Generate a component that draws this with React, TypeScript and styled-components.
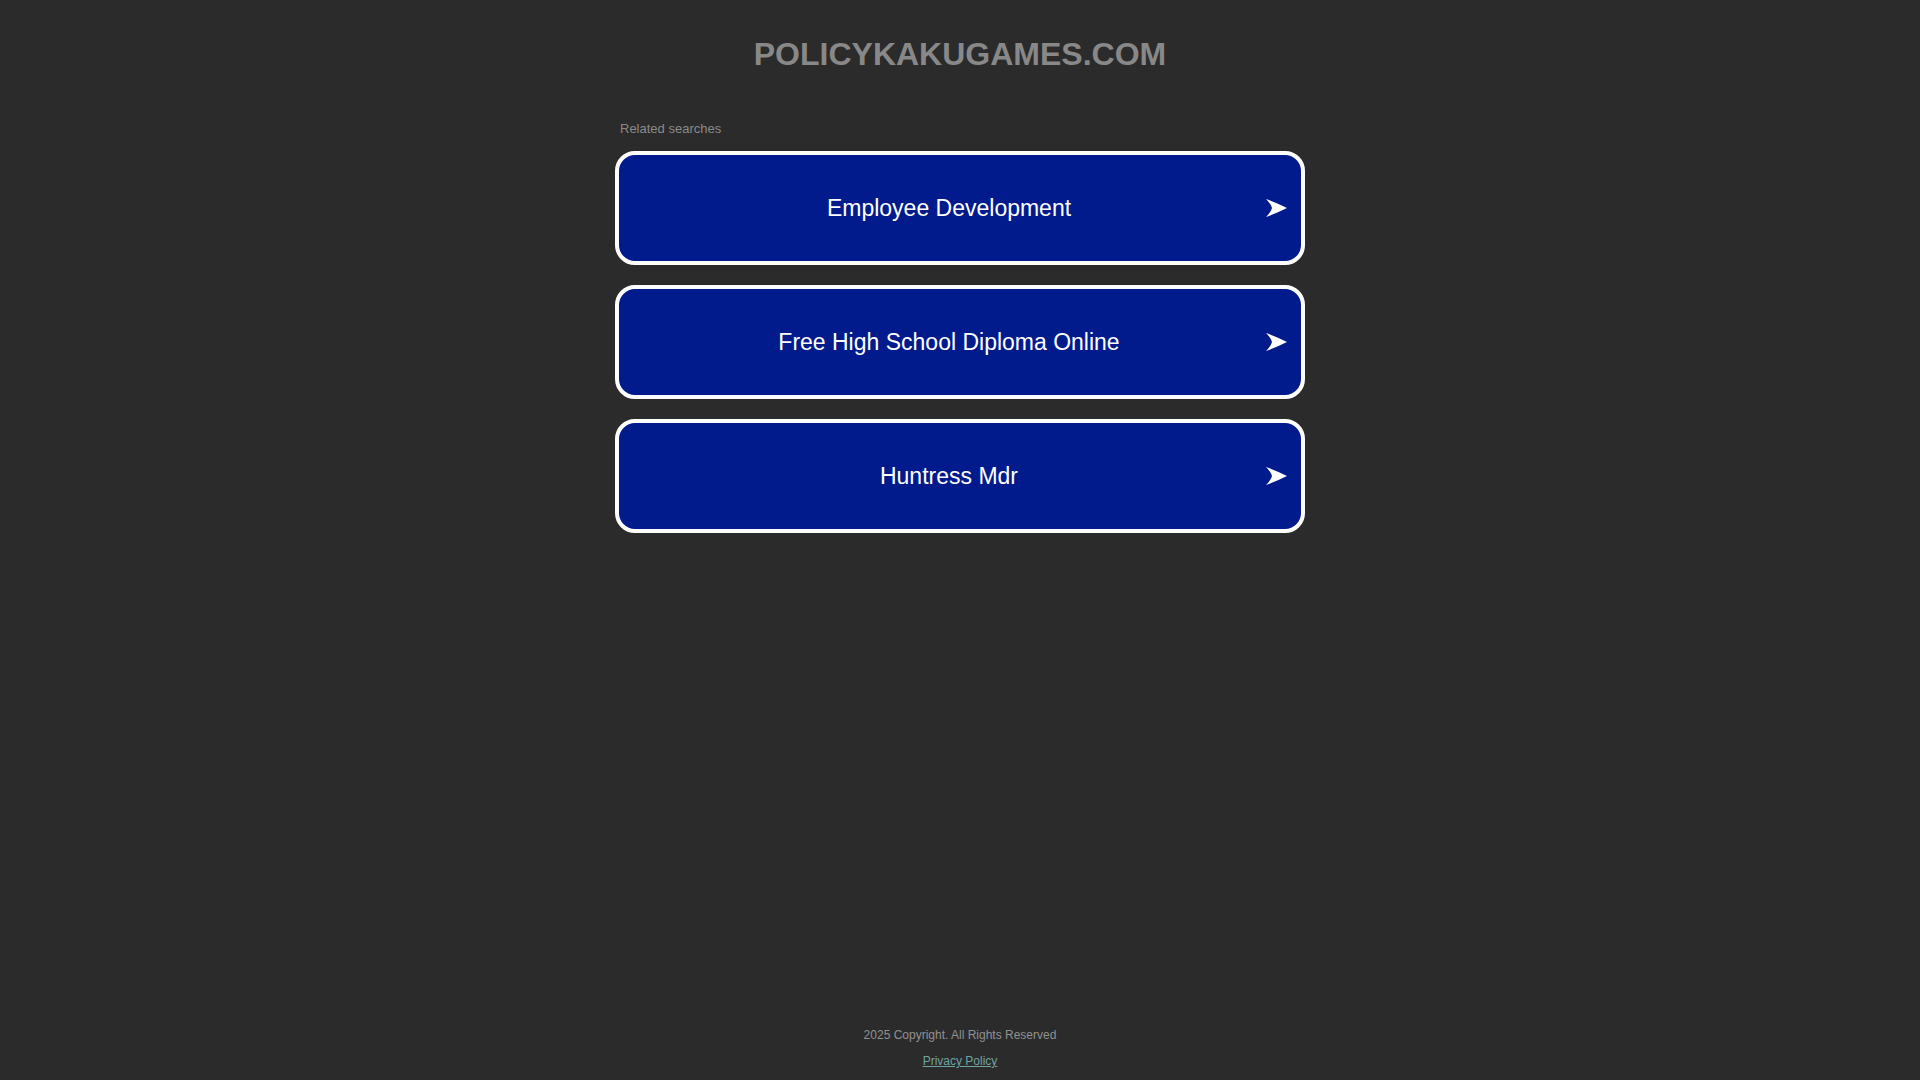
import React from "react";
import styled, { createGlobalStyle } from "styled-components";

const GlobalStyle = createGlobalStyle`
  html, body {
    margin: 0;
    padding: 0;
    background: #2b2b2b;
    font-family: "Liberation Sans", Arial, sans-serif;
  }
`;

const Page = styled.div`
  min-height: 100vh;
  display: flex;
  flex-direction: column;
  align-items: center;
  box-sizing: border-box;
`;

const Title = styled.h1`
  margin: 36px 0 0;
  font-size: 32px;
  line-height: 37px;
  font-weight: 700;
  color: #888888;
`;

const Content = styled.main`
  width: 690px;
  margin-top: 48px;
  display: flex;
  flex-direction: column;
`;

const Label = styled.div`
  font-size: 13px;
  line-height: 15px;
  color: #8a8a8a;
  padding-left: 5px;
  margin-bottom: 15px;
`;

const Card = styled.a`
  box-sizing: border-box;
  height: 114px;
  margin-bottom: 20px;
  display: flex;
  align-items: center;
  padding: 0 14px 0 13px;
  background: #011a8c;
  border: 4px solid #ffffff;
  border-radius: 20px;
  color: #ffffff;
  text-decoration: none;
  cursor: pointer;
`;

const CardText = styled.span`
  flex: 1;
  text-align: center;
  font-size: 23px;
  line-height: 27px;
`;

const Arrow = styled.svg`
  width: 21px;
  height: 18px;
  flex: none;
`;

const Footer = styled.footer`
  margin-top: auto;
  padding-bottom: 12px;
  display: flex;
  flex-direction: column;
  align-items: center;
  gap: 12px;
  font-size: 12px;
  line-height: 14px;
  color: #919191;
`;

const PolicyLink = styled.a`
  color: #6fa3a3;
  text-decoration: underline;
`;

const searches = [
  "Employee Development",
  "Free High School Diploma Online",
  "Huntress Mdr",
];

export default function App() {
  return (
    <>
      <GlobalStyle />
      <Page>
        <Title>POLICYKAKUGAMES.COM</Title>
        <Content>
          <Label>Related searches</Label>
          {searches.map((s) => (
            <Card key={s}>
              <CardText>{s}</CardText>
              <Arrow viewBox="0 0 21 18">
                <path d="M0 0 Q10 3.5 21 9 Q10 14.5 0 18 Q5 13 6 9 Q5 5 0 0 Z" fill="#ffffff" />
              </Arrow>
            </Card>
          ))}
        </Content>
        <Footer>
          <span>2025 Copyright. All Rights Reserved</span>
          <PolicyLink href="#">Privacy Policy</PolicyLink>
        </Footer>
      </Page>
    </>
  );
}
